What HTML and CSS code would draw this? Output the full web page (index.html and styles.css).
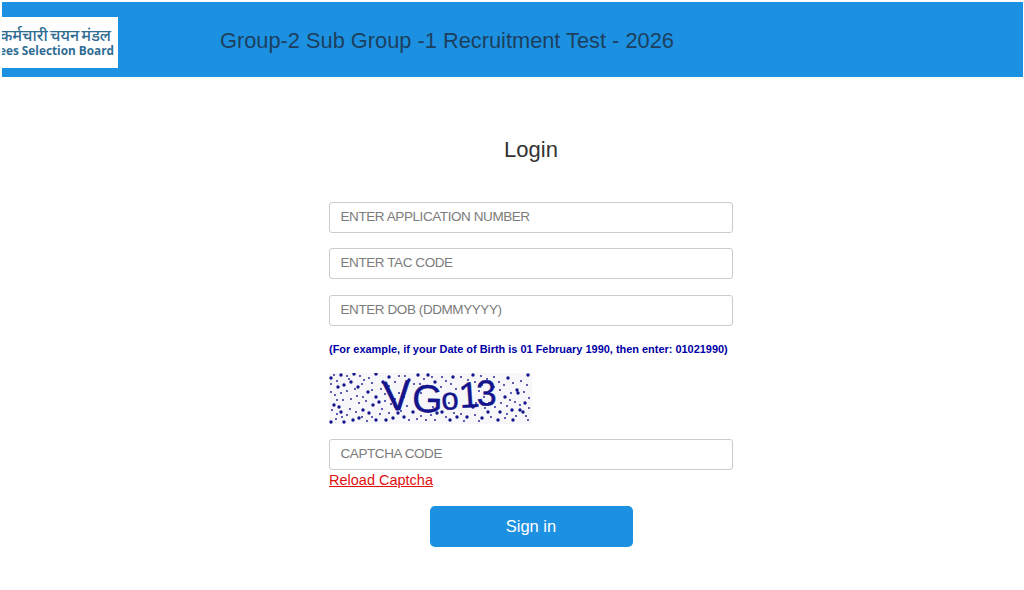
FILE: index.html
```html
<!DOCTYPE html>
<html lang="en">
<head>
<meta charset="utf-8">
<title>Group-2 Sub Group -1 Recruitment Test - 2026</title>
<link rel="stylesheet" href="styles.css">
</head>
<body>
<header class="topbar">
  <div class="logo">
    <span class="logo-hi">कर्मचारी चयन मंडल</span>
    <span class="logo-en">ees Selection Board</span>
  </div>
  <h1 class="test-title">Group-2 Sub Group -1 Recruitment Test - 2026</h1>
</header>
<main class="login">
  <h2 class="login-title">Login</h2>
  <form class="login-form">
    <input class="field" type="text" placeholder="ENTER APPLICATION NUMBER">
    <input class="field" type="text" placeholder="ENTER TAC CODE">
    <input class="field" type="text" placeholder="ENTER DOB (DDMMYYYY)">
    <p class="hint">(For example, if your Date of Birth is 01 February 1990, then enter: 01021990)</p>
    <svg class="captcha" viewBox="0 0 203 51" width="203" height="51" role="img" aria-label="Captcha image">
      <rect width="203" height="51" fill="#f7f7fa"/>
      <path class="dots-big" d="M2 5h0M12 2h0M25 1h0M47 1h0M9 14h0M15 12h0M22 9h0M29 14h0M39 19h0M47 24h0M54 9h0M60 4h0M5 32h0M10 34h0M12 39h0M2 49h0M15 49h0M24 47h0M30 45h0M47 47h0M57 47h0M44 32h0M50 29h0M40 40h0M34 37h0M69 40h0M64 45h0M75 44h0M84 39h0M89 2h0M99 2h0M80 7h0M106 9h0M124 4h0M144 2h0M134 15h0M179 5h0M188 17h0M196 30h0M176 24h0M171 39h0M183 37h0M191 37h0M194 39h0M169 47h0M184 47h0M138 44h0M128 44h0M153 45h0M113 39h0M121 47h0M144 34h0M159 39h0M108 40h0M189 20h0M199 2h0"/>
      <path class="dots-small" d="M5 2h0M8 8h0M2 11h0M18 3h0M20 6h0M31 3h0M35 7h0M40 5h0M43 10h0M33 11h0M26 16h0M18 18h0M12 20h0M6 22h0M2 19h0M28 23h0M34 24h0M43 17h0M37 28h0M30 30h0M22 26h0M14 27h0M8 27h0M3 37h0M8 41h0M13 44h0M18 42h0M7 46h0M21 36h0M27 39h0M33 44h0M38 48h0M43 44h0M51 41h0M53 36h0M60 40h0M62 31h0M56 28h0M66 34h0M72 38h0M78 33h0M80 47h0M88 46h0M92 43h0M97 47h0M102 42h0M106 47h0M117 44h0M125 40h0M132 41h0M135 48h0M146 42h0M150 48h0M162 44h0M176 45h0M178 41h0M187 43h0M197 43h0M200 35h0M191 32h0M186 29h0M181 27h0M172 30h0M166 34h0M160 30h0M155 24h0M150 18h0M153 12h0M146 9h0M139 7h0M132 4h0M117 8h0M113 4h0M103 4h0M95 6h0M91 11h0M85 11h0M76 13h0M70 3h0M66 9h0M60 13h0M70 20h0M76 3h0M165 4h0M170 9h0M175 12h0M184 10h0M192 8h0M198 12h0M195 19h0M182 20h0M171 17h0M165 14h0M158 6h0M152 3h0M122 11h0M127 16h0M141 22h0M120 30h0M100 28h0M92 20h0M104 34h0M88 33h0M75 24h0M66 26h0M147 30h0M163 22h0M200 25h0M199 47h0M178 33h0M156 35h0M112 14h0M52 16h0M56 21h0"/>
      <text class="captcha-letter letter-v" transform="translate(55 38) rotate(-4)">V</text>
      <text class="captcha-letter letter-g" transform="translate(83 39) rotate(1)">G</text>
      <text class="captcha-letter letter-o" transform="translate(113 37) rotate(-4)">o</text>
      <text class="captcha-letter" transform="translate(131 35) rotate(-4)">1</text>
      <text class="captcha-letter" transform="translate(148 33) rotate(-3)">3</text>
    </svg>
    <input class="field field-captcha" type="text" placeholder="CAPTCHA CODE">
    <a class="reload" href="#">Reload Captcha</a>
    <button class="signin" type="button">Sign in</button>
  </form>
</main>
</body>
</html>
```
FILE: styles.css
```css
* { box-sizing: border-box; }
html, body { margin: 0; padding: 0; background: #fff; }
body {
  font-family: "Liberation Sans", Arial, sans-serif;
  color: #333;
  height: 590px;
  overflow: hidden;
}
.topbar {
  display: flex;
  align-items: center;
  height: 75.5px;
  margin: 1.5px 1.5px 0;
  padding-top: 3px;
  background: #1c91e2;
}
.logo {
  flex: none;
  width: 116.5px;
  height: 51px;
  margin-top: 4px;
  background: #fff;
  overflow: hidden;
  display: flex;
  flex-direction: column;
  align-items: flex-end;
  justify-content: center;
  padding-right: 4px;
  white-space: nowrap;
  color: #2f6c94;
}
.logo-hi {
  font-family: "Noto Sans", "Noto Sans CJK SC", "DejaVu Sans", sans-serif;
  font-size: 16px;
  line-height: 16px;
  font-weight: 500;
  word-spacing: -2px;
  padding-right: 3px;
}
.logo-en {
  font-family: "Open Sans", "Noto Sans", sans-serif;
  font-size: 11.8px;
  line-height: 15px;
  font-weight: 700;
}
.test-title {
  margin: 0 0 0 102px;
  font-size: 21.8px;
  font-weight: 400;
  color: #1d3f5e;
  white-space: nowrap;
}
.login {
  width: 404px;
  margin-left: 329px;
}
.login-title {
  margin: 59.5px 0 0;
  font-size: 22px;
  line-height: 26px;
  font-weight: 400;
  text-align: center;
  color: #333;
}
.login-form {
  display: flex;
  flex-direction: column;
  align-items: flex-start;
  margin-top: 39px;
}
.field {
  display: block;
  width: 404px;
  height: 31px;
  margin-bottom: 15.5px;
  padding: 0 10.5px 2px;
  border: 1px solid #ccc;
  border-radius: 3px;
  background: #fff;
  font: 13.5px "Liberation Sans", Arial, sans-serif;
  letter-spacing: -0.42px;
  color: #333;
}
.field::placeholder { color: #7c7c7c; opacity: 1; }
.hint {
  margin: 1px 0 0;
  font-size: 10.95px;
  line-height: 14px;
  font-weight: 700;
  color: #0000a5;
  white-space: nowrap;
}
.captcha { display: block; margin-top: 17px; }
.dots-big { fill: none; stroke: #14148c; stroke-width: 3.4; stroke-linecap: round; }
.dots-small { fill: none; stroke: #2a2a9a; stroke-width: 2; stroke-linecap: round; }
.captcha-letter {
  font-family: "Liberation Sans", Arial, sans-serif;
  font-size: 36px;
  fill: #14148c;
  stroke: #14148c;
  stroke-width: 0.5;
}
.letter-v { font-size: 42px; }
.letter-g { font-size: 39px; }
.letter-o { font-size: 31px; }
.field-captcha { margin: 15px 0 0; }
.reload {
  margin-top: 2px;
  font-size: 14.5px;
  line-height: 17px;
  color: #e01010;
  text-decoration: underline;
}
.signin {
  align-self: center;
  width: 203px;
  height: 41px;
  margin-top: 17px;
  border: 0;
  border-radius: 5px;
  background: #1c91e2;
  color: #fff;
  font: 16.5px "Liberation Sans", Arial, sans-serif;
}
```
